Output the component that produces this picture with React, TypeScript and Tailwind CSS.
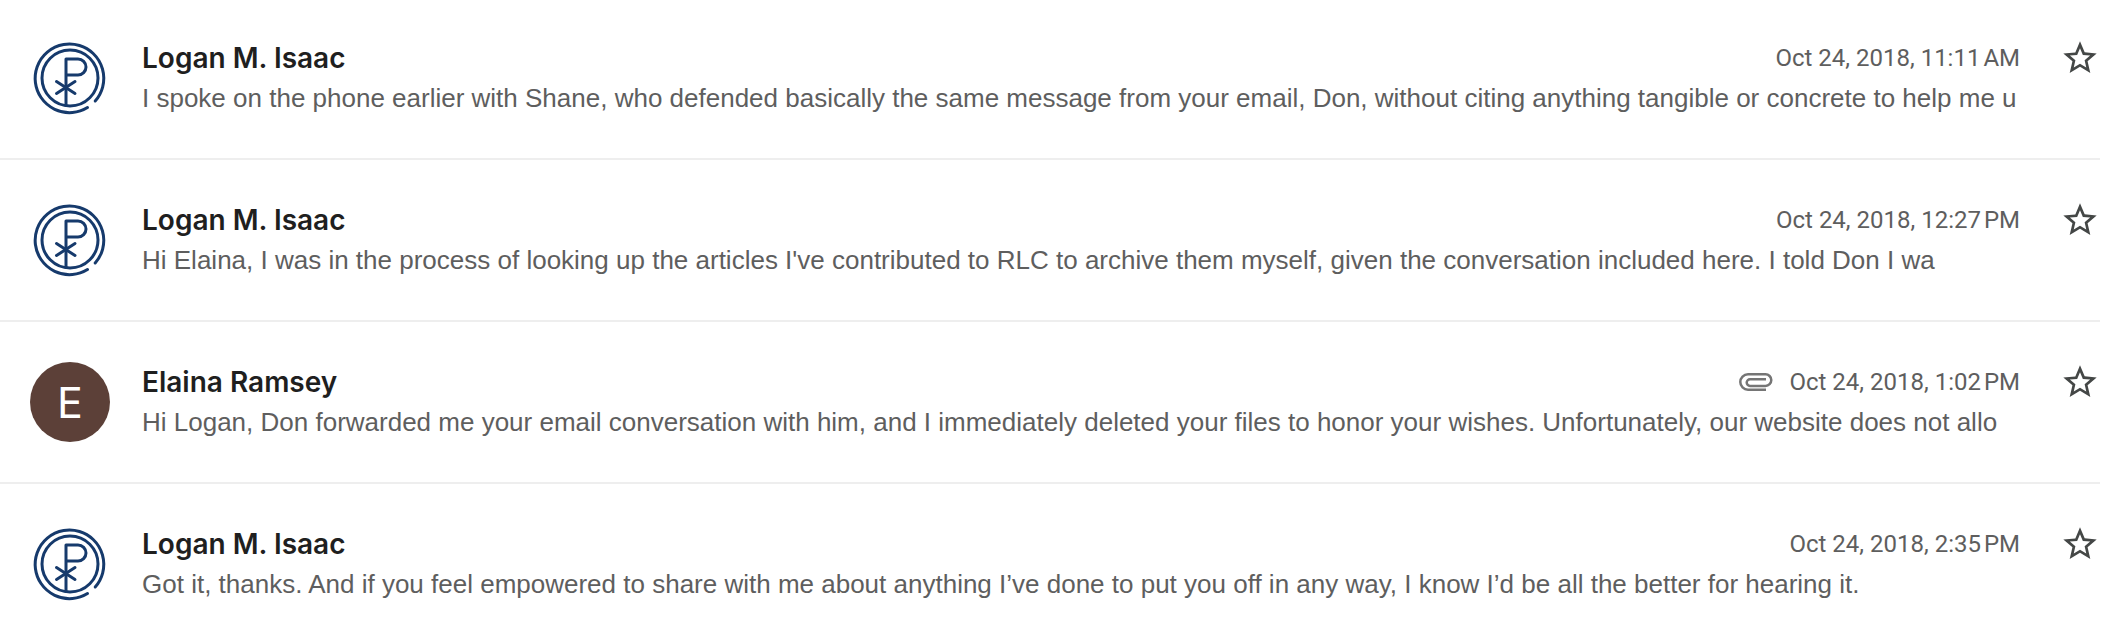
import React, { useState } from "react";

type Message = {
  id: number;
  sender: string;
  date: string;
  preview: string;
  avatar: "logo" | "letter";
  hasAttachment?: boolean;
};

const messages: Message[] = [
  {
    id: 1,
    sender: "Logan M. Isaac",
    date: "Oct 24, 2018, 11:11\u202fAM",
    preview:
      "I spoke on the phone earlier with Shane, who defended basically the same message from your email, Don, without citing anything tangible or concrete to help me u",
    avatar: "logo",
  },
  {
    id: 2,
    sender: "Logan M. Isaac",
    date: "Oct 24, 2018, 12:27\u202fPM",
    preview:
      "Hi Elaina, I was in the process of looking up the articles I've contributed to RLC to archive them myself, given the conversation included here. I told Don I wa",
    avatar: "logo",
  },
  {
    id: 3,
    sender: "Elaina Ramsey",
    date: "Oct 24, 2018, 1:02\u202fPM",
    preview:
      "Hi Logan, Don forwarded me your email conversation with him, and I immediately deleted your files to honor your wishes. Unfortunately, our website does not allo",
    avatar: "letter",
    hasAttachment: true,
  },
  {
    id: 4,
    sender: "Logan M. Isaac",
    date: "Oct 24, 2018, 2:35\u202fPM",
    preview:
      "Got it, thanks. And if you feel empowered to share with me about anything I’ve done to put you off in any way, I know I’d be all the better for hearing it.",
    avatar: "logo",
  },
];

const LogoAvatar = () => (
  <svg
    viewBox="0 0 80 80"
    className="size-20 shrink-0"
    fill="none"
    stroke="#163a6c"
    strokeWidth="3"
    strokeLinecap="round"
    strokeLinejoin="round"
    aria-hidden="true"
  >
    <path d="M57.5 69.5A34.3 34.3 0 1 1 65.2 63" />
    <circle cx="40" cy="40" r="28" />
    <path d="M36 67.500V21h12a8 8 0 0 1 0 16H36" />
    <path d="M26.500 43.500l18.500 12M45 43.500l-18.500 12" />
  </svg>
);

const AttachmentIcon = () => (
  <svg
    viewBox="0 0 34 18"
    className="h-[18px] w-[34px]"
    fill="none"
    stroke="#757575"
    strokeWidth="2.5"
    role="img"
    aria-label="Attachment"
  >
    <path d="M27 16.700H9a7.700 7.700 0 0 1 0-15.400h17.500a5.800 5.800 0 0 1 0 11.600H11a3.300 3.300 0 0 1 0-6.600h16" />
  </svg>
);

const MessageRow = ({ message }: { message: Message }) => {
  const [starred, setStarred] = useState(false);

  return (
    <li className="mr-7 flex items-start border-b-2 border-[#eeeeee] pt-10 pb-10 pl-[30px] first:pt-[38px] last:border-b-0">
      {message.avatar === "logo" ? (
        <LogoAvatar />
      ) : (
        <div className="flex size-20 shrink-0 items-center justify-center rounded-full bg-[#5c4038] font-['Inter',sans-serif] text-[43px] text-white">
          {message.sender[0]}
        </div>
      )}

      <div className="ml-8 min-w-0 flex-1">
        <div className="flex h-10 items-center justify-between">
          <h3 className="font-['Inter',sans-serif] text-[28px] font-semibold text-[#1f1f1f]">
            {message.sender}
          </h3>
          <div className="flex items-center gap-4">
            {message.hasAttachment && <AttachmentIcon />}
            <time className="font-['Roboto',sans-serif] text-2xl text-[#5e5e5e]">
              {message.date}
            </time>
          </div>
        </div>
        <p className="overflow-hidden font-['Liberation_Sans',Arial,sans-serif] text-[26px] leading-10 whitespace-nowrap text-[#5e5e5e]">
          {message.preview}
        </p>
      </div>

      <button
        type="button"
        aria-label="Star message"
        aria-pressed={starred}
        onClick={() => setStarred(!starred)}
        className="ml-10 size-10 shrink-0 cursor-pointer text-[#444746]"
      >
        <svg viewBox="0 0 24 24" className="size-10" fill="currentColor">
          <path
            d={
              starred
                ? "M12 17.270L18.180 21l-1.640-7.030L22 9.240l-7.190-.61L12 2 9.190 8.630 2 9.240l5.460 4.730L5.820 21z"
                : "M22 9.240l-7.190-.62L12 2 9.190 8.630 2 9.240l5.460 4.730L5.820 21 12 17.270 18.180 21l-1.630-7.030L22 9.240zM12 15.400l-3.760 2.270 1-4.280-3.320-2.880 4.380-.38L12 6.100l1.710 4.040 4.380.38-3.320 2.880 1 4.280L12 15.400z"
            }
          />
        </svg>
      </button>
    </li>
  );
};

export default function App() {
  return (
    <main className="bg-white">
      <ul>
        {messages.map((message) => (
          <MessageRow key={message.id} message={message} />
        ))}
      </ul>
    </main>
  );
}
